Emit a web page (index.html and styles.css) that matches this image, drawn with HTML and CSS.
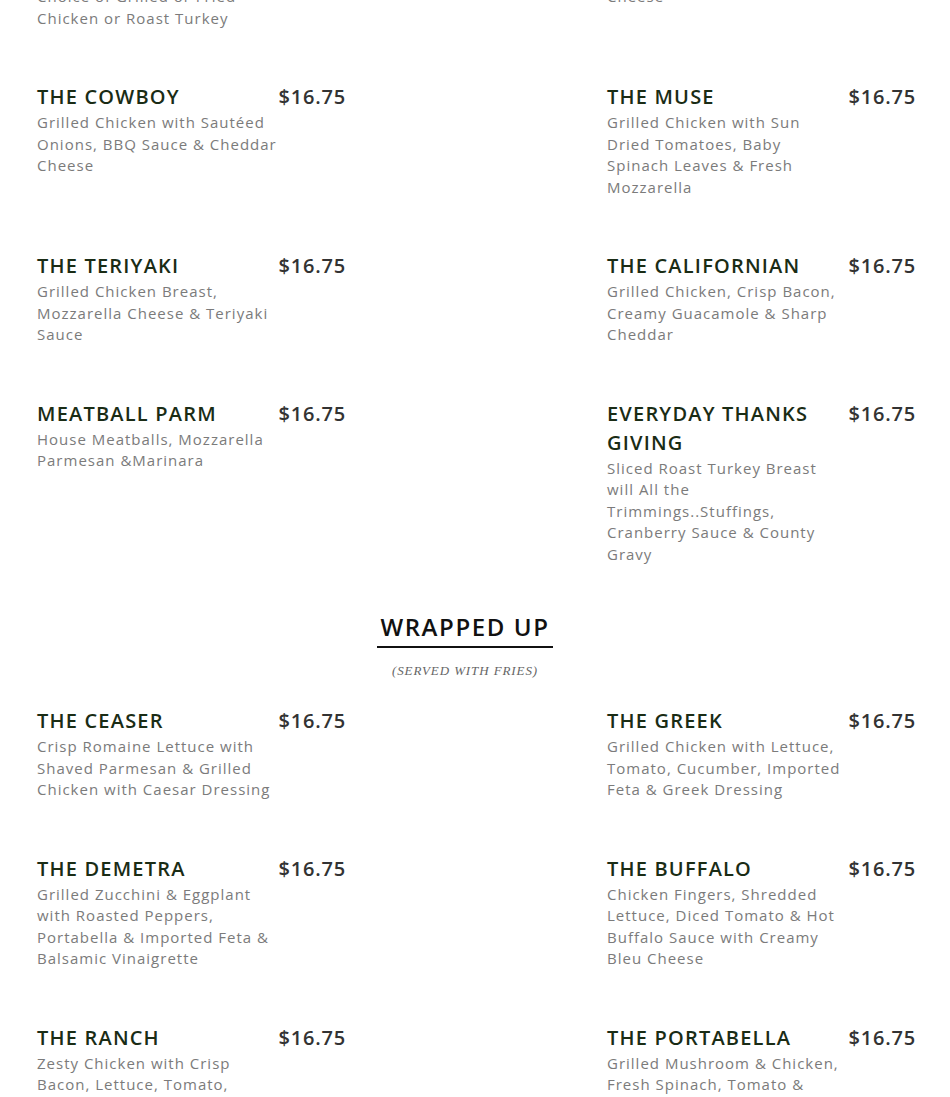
FILE: index.html
```html
<!DOCTYPE html>
<html lang="en">
<head>
<meta charset="utf-8">
<title>Menu</title>
<link rel="stylesheet" href="styles.css">
</head>
<body>
<div class="page">
  <div class="menu-grid menu-grid--first">
    <div class="item">
      <div class="item-text">
        <p class="item-desc">Choice of Grilled or Fried Chicken or Roast Turkey</p>
      </div>
    </div>
    <div class="item">
      <div class="item-text">
        <p class="item-desc">Cheese</p>
      </div>
    </div>

    <div class="item">
      <div class="item-text">
        <h3 class="item-name">THE COWBOY</h3>
        <p class="item-desc">Grilled Chicken with Sautéed Onions, BBQ Sauce &amp; Cheddar Cheese</p>
      </div>
      <span class="item-price">$16.75</span>
    </div>
    <div class="item">
      <div class="item-text">
        <h3 class="item-name">THE MUSE</h3>
        <p class="item-desc">Grilled Chicken with Sun Dried Tomatoes, Baby Spinach Leaves &amp; Fresh Mozzarella</p>
      </div>
      <span class="item-price">$16.75</span>
    </div>

    <div class="item">
      <div class="item-text">
        <h3 class="item-name">THE TERIYAKI</h3>
        <p class="item-desc">Grilled Chicken Breast, Mozzarella Cheese &amp; Teriyaki Sauce</p>
      </div>
      <span class="item-price">$16.75</span>
    </div>
    <div class="item">
      <div class="item-text">
        <h3 class="item-name">THE CALIFORNIAN</h3>
        <p class="item-desc">Grilled Chicken, Crisp Bacon, Creamy Guacamole &amp; Sharp Cheddar</p>
      </div>
      <span class="item-price">$16.75</span>
    </div>

    <div class="item">
      <div class="item-text">
        <h3 class="item-name">MEATBALL PARM</h3>
        <p class="item-desc">House Meatballs, Mozzarella Parmesan &amp;Marinara</p>
      </div>
      <span class="item-price">$16.75</span>
    </div>
    <div class="item">
      <div class="item-text">
        <h3 class="item-name">EVERYDAY THANKS GIVING</h3>
        <p class="item-desc">Sliced Roast Turkey Breast will All the Trimmings..Stuffings, Cranberry Sauce &amp; County Gravy</p>
      </div>
      <span class="item-price">$16.75</span>
    </div>
  </div>

  <div class="section-head">
    <h2 class="section-title">WRAPPED UP</h2>
    <p class="section-note">(SERVED WITH FRIES)</p>
  </div>

  <div class="menu-grid">
    <div class="item">
      <div class="item-text">
        <h3 class="item-name">THE CEASER</h3>
        <p class="item-desc">Crisp Romaine Lettuce with Shaved Parmesan &amp; Grilled Chicken with Caesar Dressing</p>
      </div>
      <span class="item-price">$16.75</span>
    </div>
    <div class="item">
      <div class="item-text">
        <h3 class="item-name">THE GREEK</h3>
        <p class="item-desc">Grilled Chicken with Lettuce, Tomato, Cucumber, Imported Feta &amp; Greek Dressing</p>
      </div>
      <span class="item-price">$16.75</span>
    </div>

    <div class="item">
      <div class="item-text">
        <h3 class="item-name">THE DEMETRA</h3>
        <p class="item-desc">Grilled Zucchini &amp; Eggplant with Roasted Peppers, Portabella &amp; Imported Feta &amp; Balsamic Vinaigrette</p>
      </div>
      <span class="item-price">$16.75</span>
    </div>
    <div class="item">
      <div class="item-text">
        <h3 class="item-name">THE BUFFALO</h3>
        <p class="item-desc">Chicken Fingers, Shredded Lettuce, Diced Tomato &amp; Hot Buffalo Sauce with Creamy Bleu Cheese</p>
      </div>
      <span class="item-price">$16.75</span>
    </div>

    <div class="item">
      <div class="item-text">
        <h3 class="item-name">THE RANCH</h3>
        <p class="item-desc">Zesty Chicken with Crisp Bacon, Lettuce, Tomato, Onions &amp; Ranch Dressing</p>
      </div>
      <span class="item-price">$16.75</span>
    </div>
    <div class="item">
      <div class="item-text">
        <h3 class="item-name">THE PORTABELLA</h3>
        <p class="item-desc">Grilled Mushroom &amp; Chicken, Fresh Spinach, Tomato &amp; Fresh Mozzarella</p>
      </div>
      <span class="item-price">$16.75</span>
    </div>
  </div>
</div>
</body>
</html>
```

FILE: styles.css
```css
html, body {
  margin: 0;
  padding: 0;
  background: #ffffff;
}

body {
  font-family: "Open Sans", "Liberation Sans", sans-serif;
  overflow: hidden;
}

.page {
  padding: 0 34px 0 37px;
  margin-top: -14px;
}

.menu-grid {
  display: grid;
  grid-template-columns: 309px 309px;
  column-gap: 261px;
  row-gap: 53px;
  align-items: start;
}

.item {
  display: flex;
  align-items: flex-start;
}

.item-text {
  width: 241px;
  flex: none;
}

.item-name {
  margin: 0 0 1px;
  font-size: 20px;
  font-weight: 600;
  line-height: 29px;
  letter-spacing: 1.2px;
  color: #1a2c15;
}

.item-desc {
  margin: 0;
  font-size: 15px;
  line-height: 21.5px;
  letter-spacing: 1px;
  color: #7b7b7b;
}

.item-price {
  flex: 1;
  text-align: right;
  font-size: 20px;
  font-weight: 600;
  line-height: 29px;
  letter-spacing: 0.8px;
  color: #333333;
}

.section-head {
  margin: 45px 23px 26px 0;
  text-align: center;
}

.section-title {
  display: inline-block;
  margin: 0;
  padding: 0 3px 2px;
  font-size: 24px;
  font-weight: 600;
  line-height: 34px;
  letter-spacing: 1.6px;
  color: #111111;
  border-bottom: 2px solid #111111;
}

.section-note {
  margin: 14px 0 0;
  font-family: "Liberation Serif", "Times New Roman", serif;
  font-style: italic;
  font-size: 13px;
  line-height: 18px;
  letter-spacing: 0.9px;
  color: #666666;
}
```
